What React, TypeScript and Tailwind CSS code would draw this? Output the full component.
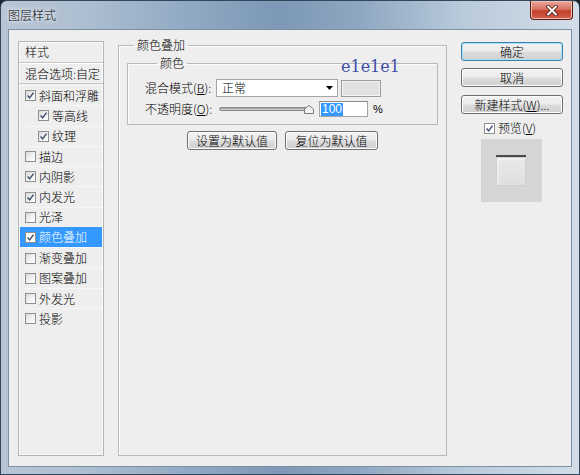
import React from 'react';

type LayerStyle = { label: string; checked?: boolean; indent?: boolean; active?: boolean };

const styleList: LayerStyle[] = [
  { label: '斜面和浮雕', checked: true },
  { label: '等高线', checked: true, indent: true },
  { label: '纹理', checked: true, indent: true },
  { label: '描边' },
  { label: '内阴影', checked: true },
  { label: '内发光', checked: true },
  { label: '光泽' },
  { label: '颜色叠加', checked: true, active: true },
  { label: '渐变叠加' },
  { label: '图案叠加' },
  { label: '外发光' },
  { label: '投影' },
];

const CheckBox = ({ checked, light }: { checked?: boolean; light?: boolean }) => (
  <span
    className={`w-[11px] h-[11px] shrink-0 flex items-center justify-center border border-[#8e8f8f] ${
      light ? 'bg-white' : 'bg-[linear-gradient(135deg,#d9dadb_0%,#f4f4f4_60%,#ffffff_100%)]'
    }`}
  >
    {checked && (
      <svg width="9" height="9" viewBox="0 0 9 9">
        <path d="M1.6 4.6 L3.6 6.9 L7.6 1.6" stroke="#3f5073" strokeWidth="1.5" fill="none" />
      </svg>
    )}
  </span>
);

const Button = ({ children, primary, className = '' }: { children: React.ReactNode; primary?: boolean; className?: string }) => (
  <button
    className={`h-[19px] rounded-[3px] border flex items-center justify-center text-[12px] leading-none text-black bg-[linear-gradient(#f3f3f3_0%,#ebebeb_48%,#dcdcdc_52%,#d0d0d0_100%)] ${
      primary
        ? 'border-[#3c7fb1] shadow-[inset_0_0_0_1px_#a6e2f8]'
        : 'border-[#707070] shadow-[inset_0_0_0_1px_#fbfbfb]'
    } ${className}`}
  >
    {children}
  </button>
);

const Key = ({ k }: { k: string }) => <span className="underline underline-offset-1">{k}</span>;

export default function App() {
  return (
    <div className="w-[580px] h-[475px] bg-[#1b2530] font-['Noto_Sans_CJK_SC',sans-serif] font-light text-[12px] text-black">
      <div className="w-full h-full flex flex-col rounded-t-[7px] border border-[#33465a] bg-[linear-gradient(90deg,#b7c6d6_0%,#aebfd1_14%,#91aac4_32%,#7c98b6_48%,#8ea7c1_62%,#b9cadb_80%,#d2dde8_100%)]">
        {/* title bar */}
        <div className="h-[28px] flex items-start shrink-0">
          <span className="ml-[7px] mt-[6px] leading-[16px] [text-shadow:0_0_6px_#ffffff,0_0_3px_#ffffff]">图层样式</span>
          <div className="ml-auto mr-[6px] mt-0 w-[43px] h-[19px] rounded-b-[4px] border border-t-0 border-[#5a1d16] bg-[linear-gradient(#e9a99c_0%,#d77363_45%,#c2412c_55%,#d0604a_100%)] shadow-[inset_0_0_0_1px_#eebcb2] flex items-center justify-center">
            <svg width="12" height="11" viewBox="0 0 12 11">
              <path d="M2 1.5 L10 9.5 M10 1.5 L2 9.5" stroke="#4a1a12" strokeWidth="3.6" strokeLinecap="round" />
              <path d="M2 1.5 L10 9.5 M10 1.5 L2 9.5" stroke="#ffffff" strokeWidth="2" strokeLinecap="round" />
            </svg>
          </div>
        </div>

        {/* client area */}
        <div className="flex-1 mx-[7px] mb-[7px] border border-[#7d8fa3] bg-[#eeeeee] flex items-stretch pl-[9px] pb-[10px]">
          {/* style list */}
          <div className="w-[86px] mt-[11px] border border-[#b4b4b4] shadow-[inset_0_0_0_1px_#fafafa] flex flex-col">
            <div className="h-[21px] flex items-center pl-[6px] border-b border-[#c6c6c6]">样式</div>
            <div className="h-[21px] flex items-center pl-[6px] border-b border-[#c6c6c6] border-t border-t-white whitespace-nowrap">
              混合选项:自定
            </div>
            <div className="flex flex-col pt-[1px] pr-[1px] pl-px">
              {styleList.map((s) => (
                <div
                  key={s.label}
                  className={`h-[20.3px] flex items-center gap-[3px] whitespace-nowrap ${s.indent ? 'pl-[18px]' : 'pl-[5px]'} ${
                    s.active ? 'bg-[#3399ff] text-white' : 'border-t border-t-[#f6f6f6]'
                  }`}
                >
                  <CheckBox checked={s.checked} light={s.active} />
                  <span className="leading-none">{s.label}</span>
                </div>
              ))}
            </div>
          </div>

          {/* colour overlay settings */}
          <fieldset className="w-[329px] ml-[14px] mt-[7px] border border-[#b9b9b9] shadow-[inset_1px_1px_0_#fbfbfb]">
            <legend className="ml-[15px] px-[3px] leading-[16px]">颜色叠加</legend>
            <fieldset className="mx-[8px] mt-[2px] border border-[#b9b9b9] shadow-[inset_1px_1px_0_#fbfbfb] pl-[17px] pt-[7px] pb-[5px]">
              <legend className="ml-[12px] px-[3px] leading-[16px]">颜色</legend>
              <div className="relative h-[20px] flex items-center">
                <span className="w-[71px] whitespace-nowrap">
                  混合模式(<Key k="B" />):
                </span>
                <div className="w-[122px] h-[18px] bg-white border border-[#a5a5a5] flex items-center pl-[5px] pr-[4px]">
                  <span className="leading-none">正常</span>
                  <svg className="ml-auto" width="7" height="4" viewBox="0 0 7 4">
                    <path d="M0 0 H7 L3.5 4 Z" fill="#000" />
                  </svg>
                </div>
                <div className="ml-[3px] w-[40px] h-[17px] bg-[#e1e1e1] border border-[#9c9c9c] shadow-[inset_0_0_0_1px_#f4f4f4]" />
                <span className="absolute left-[196px] top-[-20px] font-['DejaVu_Serif',serif] font-normal text-[16px] leading-[17px] text-[#3b4fa8]">
                  e1e1e1
                </span>
              </div>
              <div className="h-[20px] mt-px flex items-center">
                <span className="w-[71px] whitespace-nowrap">
                  不透明度(<Key k="O" />):
                </span>
                <div className="relative w-[100px] h-[14px] flex items-center">
                  <div className="ml-[3px] w-[91px] h-[4px] rounded-[2px] border border-[#8a8a8a] bg-[linear-gradient(#9a9a9a,#d8d8d8)]" />
                  <svg className="absolute left-[88px] top-[3px]" width="10" height="9" viewBox="0 0 10 9">
                    <path d="M0.5 8.5 V4 L5 0.5 L9.5 4 V8.5 Z" fill="#f2f2f2" stroke="#7a7a7a" />
                  </svg>
                </div>
                <div className="ml-[3px] w-[49px] h-[16px] bg-white border border-[#a5a5a5] border-t-[#8a8a8a] flex items-center pl-px">
                  <span className="bg-[#3399ff] text-white font-['Liberation_Sans',sans-serif] font-normal text-[12px] leading-[13px] px-px">100</span>
                </div>
                <span className="ml-[5px] font-['Liberation_Sans',sans-serif] font-normal text-[11px]">%</span>
              </div>
            </fieldset>
            <div className="mt-[6px] flex justify-center gap-[8px]">
              <Button className="w-[90px]">设置为默认值</Button>
              <Button className="w-[93px]">复位为默认值</Button>
            </div>
          </fieldset>

          {/* dialog actions */}
          <div className="ml-[14px] mt-[12px] w-[102px] flex flex-col items-center">
            <Button primary className="w-full">确定</Button>
            <Button className="w-full mt-[7px]">取消</Button>
            <Button className="w-full mt-[8px] whitespace-nowrap">
              新建样式(<Key k="W" />)...
            </Button>
            <div className="mt-[7px] h-[14px] flex items-center gap-[3px] pr-[4px]">
              <CheckBox checked light />
              <span className="leading-none">
                预览(<Key k="V" />)
              </span>
            </div>
            <div className="mt-[4px] ml-[-2px] w-[61px] h-[63px] bg-[#d5d5d5] flex items-center justify-center">
              <div className="w-[30px] h-[31px] border-t-2 border-t-[#4a4a4a] bg-[linear-gradient(180deg,#e9e9e9,#dedede)] shadow-[inset_0_0_0_1px_#cfcfcf,inset_2px_2px_3px_#f6f6f6]" />
            </div>
          </div>
        </div>
      </div>
    </div>
  );
}
